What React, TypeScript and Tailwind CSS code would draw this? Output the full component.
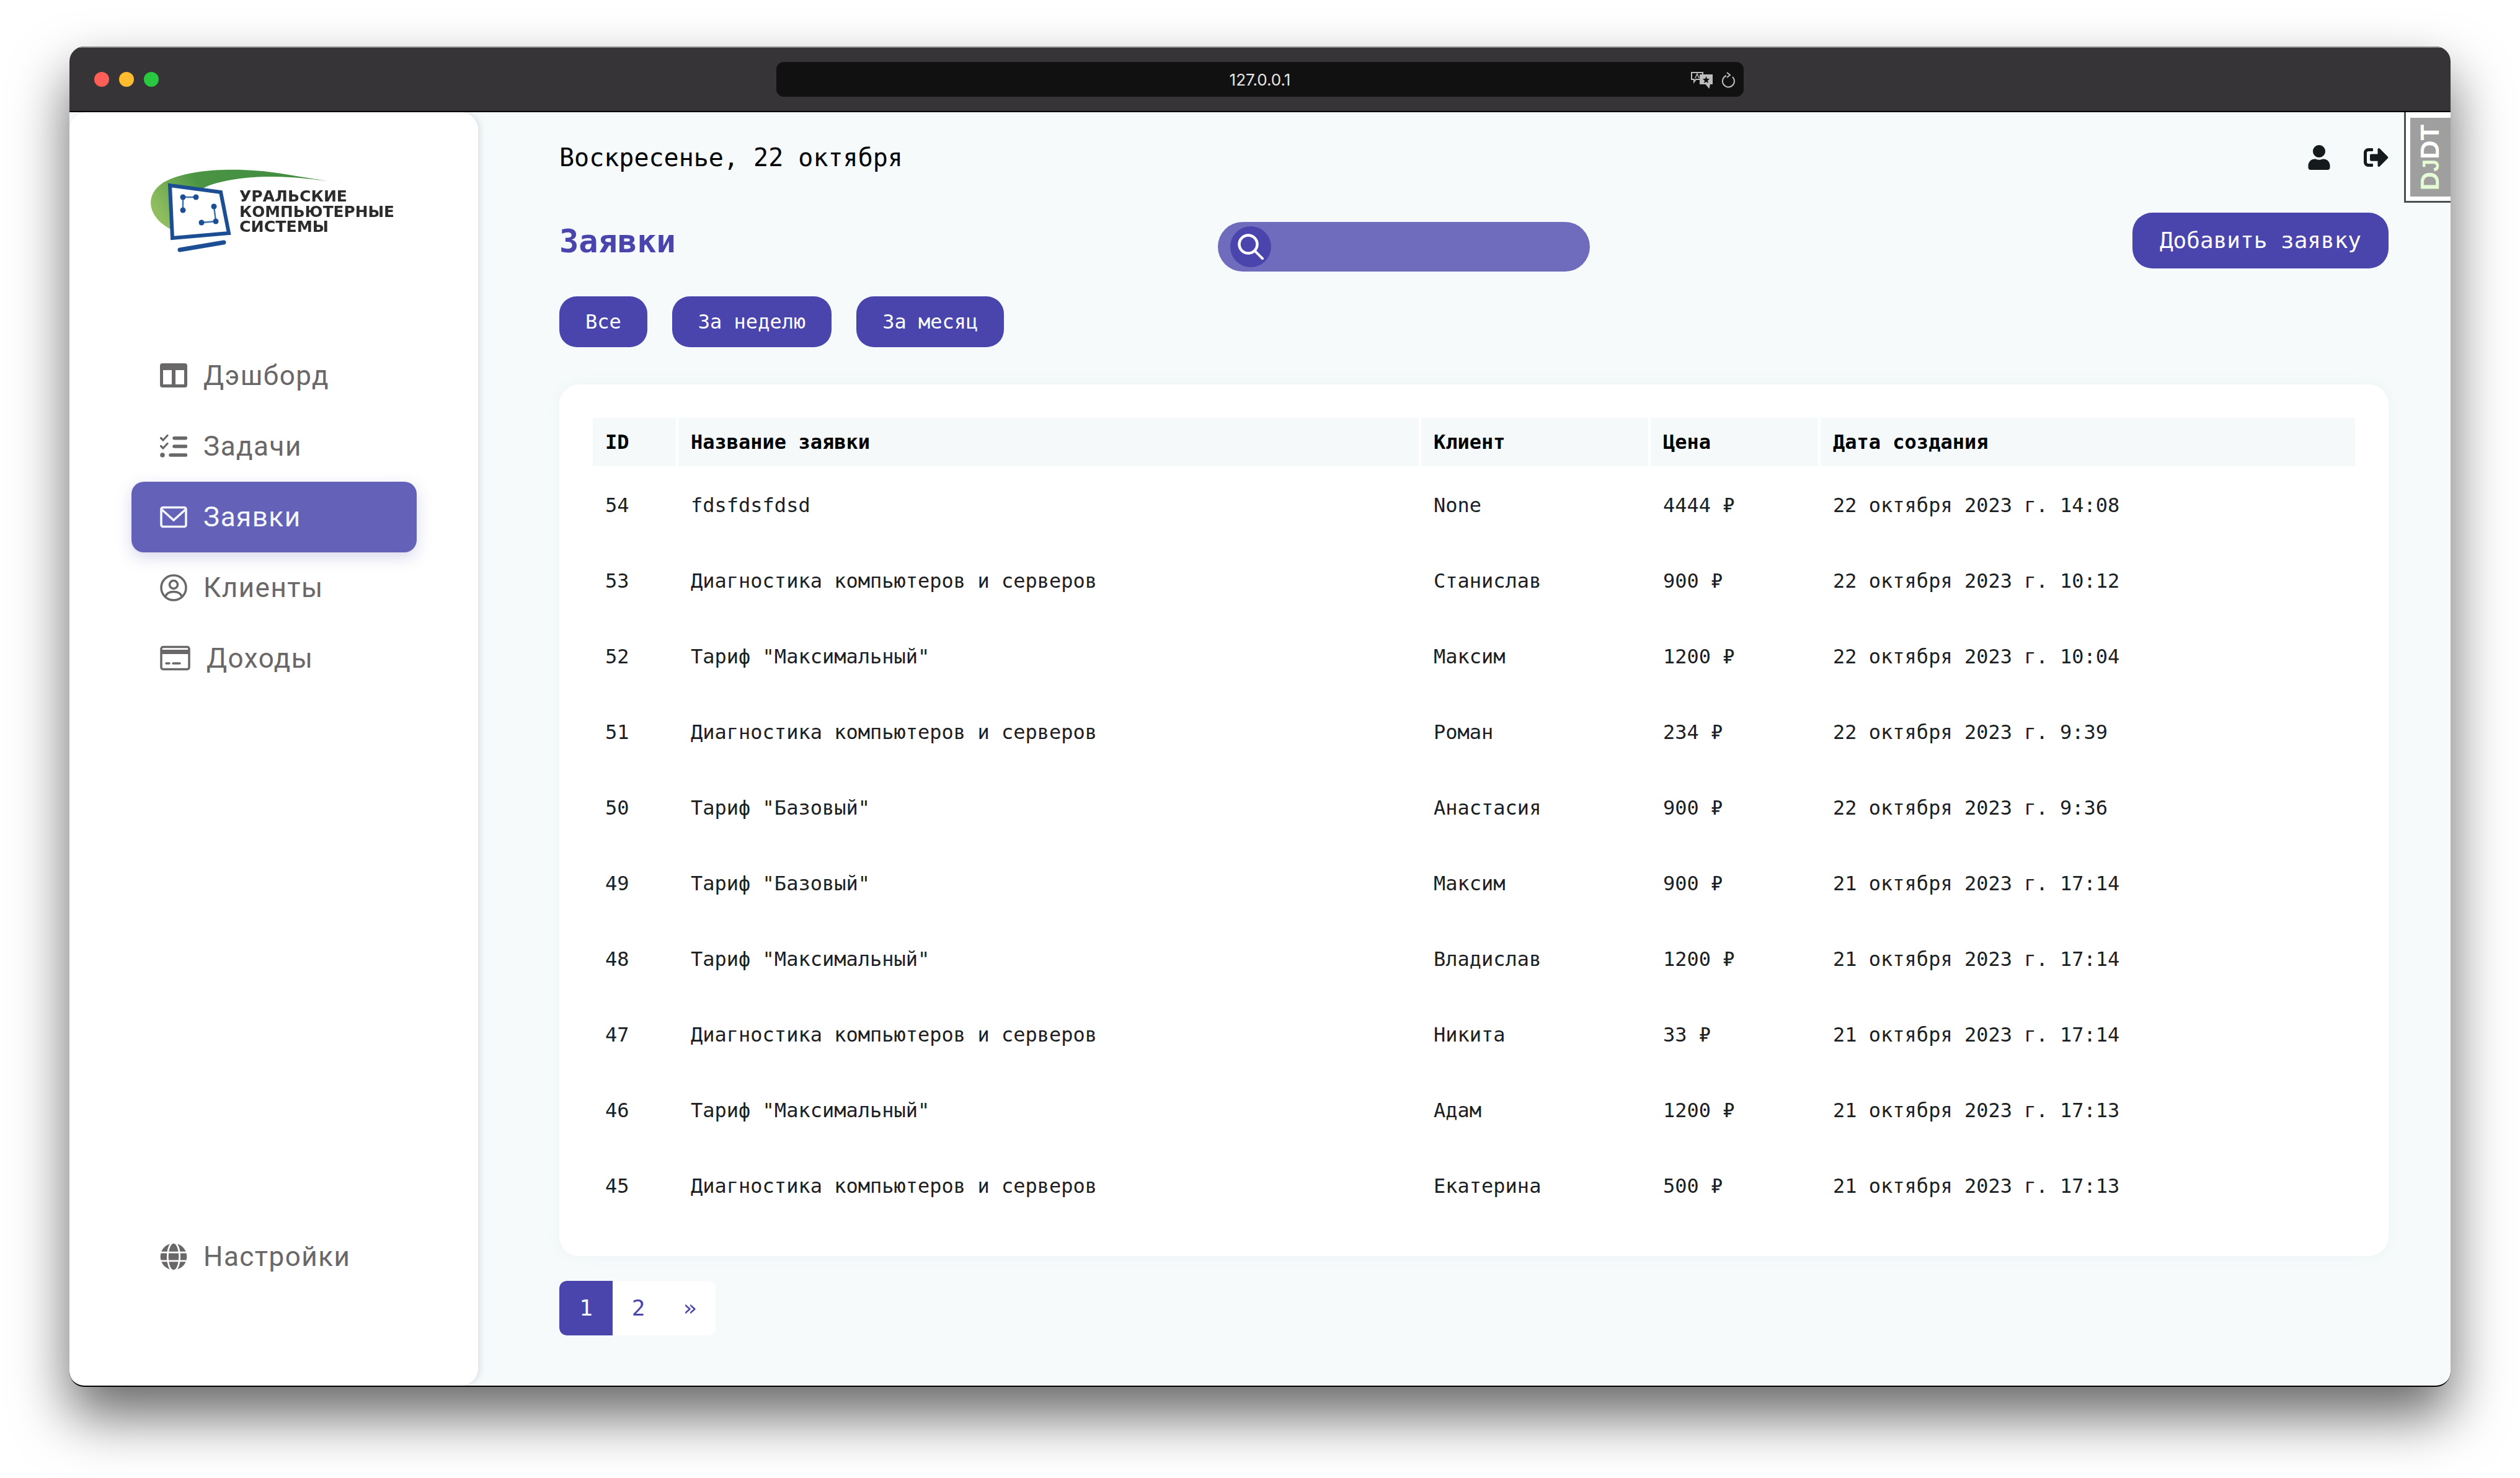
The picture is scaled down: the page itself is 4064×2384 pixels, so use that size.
import { FaGlobe, FaSignOutAlt, FaUser } from "react-icons/fa";

const rows = [
  ["54", "fdsfdsfdsd", "None", "4444 ₽", "22 октября 2023 г. 14:08"],
  ["53", "Диагностика компьютеров и серверов", "Станислав", "900 ₽", "22 октября 2023 г. 10:12"],
  ["52", 'Тариф "Максимальный"', "Максим", "1200 ₽", "22 октября 2023 г. 10:04"],
  ["51", "Диагностика компьютеров и серверов", "Роман", "234 ₽", "22 октября 2023 г. 9:39"],
  ["50", 'Тариф "Базовый"', "Анастасия", "900 ₽", "22 октября 2023 г. 9:36"],
  ["49", 'Тариф "Базовый"', "Максим", "900 ₽", "21 октября 2023 г. 17:14"],
  ["48", 'Тариф "Максимальный"', "Владислав", "1200 ₽", "21 октября 2023 г. 17:14"],
  ["47", "Диагностика компьютеров и серверов", "Никита", "33 ₽", "21 октября 2023 г. 17:14"],
  ["46", 'Тариф "Максимальный"', "Адам", "1200 ₽", "21 октября 2023 г. 17:13"],
  ["45", "Диагностика компьютеров и серверов", "Екатерина", "500 ₽", "21 октября 2023 г. 17:13"],
];

function Logo() {
  return (
    <svg width="440" height="180" viewBox="0 0 440 180" className="blur-[0.7px]">
      <defs>
        <linearGradient id="swoosh" x1="0" x2="1" y1="0.5" y2="0.3">
          <stop offset="0" stopColor="#8fbd5f" />
          <stop offset="0.3" stopColor="#4a9444" />
          <stop offset="1" stopColor="#3f8a3f" />
        </linearGradient>
      </defs>
      <path d="M58 120C22 102 12 66 46 44C88 20 176 20 236 30C272 36 310 42 334 46C290 38 232 33 190 36C150 39 122 46 105 56L58 60Z" fill="url(#swoosh)" />
      <path d="M56 49L138 60L151 126L60 134Z" fill="#fff" stroke="#1c4e93" strokeWidth="6" />
      <path d="M98 68H77V89M127 83L130 107L107 109" fill="none" stroke="#3f73ad" strokeWidth="2.5" />
      {[[77, 68], [98, 68], [77, 89], [127, 83], [130, 107], [107, 109]].map(([cx, cy]) => (
        <circle key={cx + "-" + cy} cx={cx} cy={cy} r="4.5" fill="#1c4e93" />
      ))}
      <path d="M72 153L143 141" stroke="#1c4e93" strokeWidth="7" strokeLinecap="round" />
      <g className="font-['DejaVu_Sans']" fill="#2b2b2b" fontWeight="700" fontSize="24">
        <text x="168" y="75" textLength="174" lengthAdjust="spacingAndGlyphs">УРАЛЬСКИЕ</text>
        <text x="168" y="100" textLength="250" lengthAdjust="spacingAndGlyphs">КОМПЬЮТЕРНЫЕ</text>
        <text x="168" y="124" textLength="144" lengthAdjust="spacingAndGlyphs">СИСТЕМЫ</text>
      </g>
    </svg>
  );
}

function DashIcon() {
  return (
    <svg width="44" height="44" viewBox="0 0 44 44" fill="currentColor">
      <path fillRule="evenodd" d="M4 2H40A4 4 0 0 1 44 6V37A4 4 0 0 1 40 41H4A4 4 0 0 1 0 37V6A4 4 0 0 1 4 2ZM5 13V36H19V13ZM25 13V36H39V13Z" />
    </svg>
  );
}

function TasksIcon() {
  return (
    <svg width="44" height="44" viewBox="0 0 44 44" fill="none" stroke="currentColor" strokeLinecap="round">
      <path d="M1.500 8.500L5 12L12 4.500M1.500 21.500L5 25L12 17.500" strokeWidth="3.200" />
      <circle cx="4" cy="36" r="3.800" fill="currentColor" stroke="none" />
      <path d="M23 8.700H41.500M23 22H41.500M17 36H41.500" strokeWidth="5.500" />
    </svg>
  );
}

function MailIcon() {
  return (
    <svg width="44" height="44" viewBox="0 0 44 44" fill="none" stroke="currentColor">
      <rect x="2" y="6.500" width="40" height="31" rx="3" strokeWidth="3.600" />
      <path d="M3 10L22 27L41 10" strokeWidth="3.600" />
    </svg>
  );
}

function ClientIcon() {
  return (
    <svg width="44" height="44" viewBox="0 0 44 44" fill="none" stroke="currentColor" strokeWidth="3.500">
      <circle cx="22" cy="22" r="20" />
      <circle cx="22" cy="17" r="6.500" />
      <path d="M9 36C11 30 16 28.500 22 28.500C28 28.500 33 30 35 36" />
    </svg>
  );
}

function CardIcon() {
  return (
    <svg width="49" height="44" viewBox="0 0 49 44" fill="none" stroke="currentColor">
      <rect x="2" y="3.500" width="45" height="36" rx="3" strokeWidth="3.500" />
      <path d="M2 11.500H47" strokeWidth="7" />
      <path d="M10 30H15M21 30H32" strokeWidth="3.500" strokeLinecap="round" />
    </svg>
  );
}

function SearchIcon() {
  return (
    <svg width="42" height="42" viewBox="0 0 42 42" fill="none" stroke="currentColor" strokeLinecap="round">
      <circle cx="17" cy="17" r="14.500" strokeWidth="4.500" />
      <path d="M28 28L40 40" strokeWidth="4" />
    </svg>
  );
}

function NavItem({ icon, label, active, gap = "gap-[26px]" }: { icon: React.ReactNode; label: string; active?: boolean; gap?: string }) {
  return (
    <div
      className={`flex h-[114px] w-[460px] items-center rounded-[20px] pl-[46px] font-['Roboto',sans-serif] text-[44px] tracking-[1.5px] ${gap} ${
        active ? "bg-[#6362b8] text-[#f3f6fb] shadow-[0_8px_24px_rgba(99,98,184,0.25)]" : "text-[#696767]"
      }`}
    >
      {icon}
      <span>{label}</span>
    </div>
  );
}

function Sidebar() {
  return (
    <aside className="flex w-[659px] shrink-0 flex-col rounded-[28px] bg-white pl-[100px] pt-[69px] shadow-[4px_0_10px_rgba(120,140,160,0.2)]">
      <div className="ml-[6px]">
        <Logo />
      </div>
      <nav className="mt-[119px] flex flex-col">
        <NavItem icon={<DashIcon />} label="Дэшборд" />
        <NavItem icon={<TasksIcon />} label="Задачи" />
        <NavItem icon={<MailIcon />} label="Заявки" active />
        <NavItem icon={<ClientIcon />} label="Клиенты" />
        <NavItem icon={<CardIcon />} label="Доходы" />
      </nav>
      <div className="mt-[851px]">
        <NavItem icon={<FaGlobe className="h-[44px] w-[44px]" />} label="Настройки" />
      </div>
    </aside>
  );
}

function PageBtn({ children, active }: { children: React.ReactNode; active?: boolean }) {
  return (
    <div className={`flex h-[88px] items-center justify-center text-[36px] ${active ? "w-[86px] rounded-l-[12px] bg-[#4a45ad] text-white" : "w-[83px] text-[#4a45ad]"}`}>
      {children}
    </div>
  );
}

function Main() {
  return (
    <main className="relative flex min-w-0 flex-1 flex-col pl-[131px] pr-[100px] font-['DejaVu_Sans_Mono',monospace]">
      <div className="flex h-[146px] items-center justify-between">
        <div className="text-[40px] text-black">Воскресенье, 22 октября</div>
        <div className="flex items-center gap-[52px] text-[#151a1c]">
          <FaUser className="h-[40px] w-[40px]" />
          <FaSignOutAlt className="h-[40px] w-[40px]" />
        </div>
      </div>

      <div className="flex items-start">
        <h1 className="w-[1062px] pt-[22px] text-[52px] font-bold leading-[80px] text-[#4a45ad]">Заявки</h1>
        <div className="mt-[31px] flex h-[80px] w-[600px] items-center rounded-[40px] bg-[#6f6bbd] pl-[20px]">
          <div className="flex h-[66px] w-[66px] items-center justify-center rounded-full bg-[#4a45ad] text-white">
            <SearchIcon />
          </div>
        </div>
        <button className="ml-auto mt-[16px] h-[90px] w-[413px] rounded-[32px] bg-[#4a45ad] text-[36px] text-white">Добавить заявку</button>
      </div>

      <div className="mt-[40px] flex gap-[40px]">
        {["Все", "За неделю", "За месяц"].map((label) => (
          <button key={label} className="h-[82px] rounded-[28px] bg-[#4a45ad] px-[42px] text-[32px] text-white">
            {label}
          </button>
        ))}
      </div>

      <div className="mt-[60px] rounded-[32px] bg-white p-[50px] shadow-[0_0_20px_rgba(120,140,160,0.07)]">
        <table className="w-full table-fixed border-separate border-spacing-[4px] text-left text-[32px] text-[#1b1f23]">
          <thead>
            <tr className="h-[78px] bg-[#f6f9fa] text-black">
              <th className="w-[134px] pl-[20px] font-bold">ID</th>
              <th className="w-[1194px] pl-[20px] font-bold">Название заявки</th>
              <th className="w-[366px] pl-[20px] font-bold">Клиент</th>
              <th className="w-[270px] pl-[20px] font-bold">Цена</th>
              <th className="pl-[20px] font-bold">Дата создания</th>
            </tr>
          </thead>
          <tbody>
            {rows.map((row) => (
              <tr key={row[0]} className="h-[118px]">
                {row.map((cell, i) => (
                  <td key={i} className="pl-[20px]">
                    {cell}
                  </td>
                ))}
              </tr>
            ))}
          </tbody>
        </table>
      </div>

      <div className="mt-[40px] flex w-[252px] overflow-hidden rounded-[12px] bg-white">
        <PageBtn active>1</PageBtn>
        <PageBtn>2</PageBtn>
        <PageBtn>»</PageBtn>
      </div>

      <div className="absolute right-0 top-0 h-[146px] w-[75px] border-b-[3px] border-l-[3px] border-[#4a4f50] bg-white pl-[7px] pt-[9px]">
        <div className="flex h-[127px] w-[65px] items-center justify-center bg-[#9e9f9e]">
          <div className="-rotate-90 whitespace-nowrap font-['Liberation_Sans',sans-serif] text-[42px] font-bold leading-none text-white">
            <span className="text-[#e5fbd5]">D</span>
            <span className="text-[36px] text-[#e5fbd5]">J</span>
            DT
          </div>
        </div>
      </div>
    </main>
  );
}

export default function App() {
  return (
    <div className="h-[2384px] w-[4064px] overflow-hidden bg-white pl-[112px] pt-[75px]">
      <div className="flex h-[2162px] w-[3840px] flex-col overflow-hidden rounded-[24px] border-b-2 border-black bg-[#f6fafb] shadow-[0_46px_90px_rgba(0,0,0,0.6)]">
        <div className="relative flex h-[106px] shrink-0 items-center justify-center border-b-2 border-t-2 border-b-black border-t-[#8d8d8d] bg-[#363437]">
          <div className="absolute left-[40px] top-[39px] flex gap-[16px]">
            <div className="h-[24px] w-[24px] rounded-full bg-[#ff5f57]" />
            <div className="h-[24px] w-[24px] rounded-full bg-[#febc2e]" />
            <div className="h-[24px] w-[24px] rounded-full bg-[#28c840]" />
          </div>
          <div className="relative flex h-[56px] w-[1560px] items-center justify-center rounded-[12px] bg-[#111111] font-['Inter',sans-serif] text-[26px] text-[#e6e6e6]">
            127.0.0.1
            <div className="absolute right-[14px] top-[15px] flex items-center gap-[14px] text-[#bdbdbd]">
              <svg width="36" height="28" viewBox="0 0 36 28" fill="none" stroke="currentColor" strokeWidth="2">
                <path d="M2 2H20V13H9L6 17V13H2Z" />
                <path d="M16 6H35V20H31L30 26L25 20H16Z" fill="currentColor" />
                <path d="M8 11L11 4L14 11" strokeWidth="1.500" />
                <path d="M25.500 8L27 12H31L28 15L29 19L25.500 17L22 19L23 15L20 12H24Z" fill="#111111" stroke="none" />
              </svg>
              <svg width="22" height="26" viewBox="0 0 22 26" fill="none" stroke="currentColor" strokeWidth="2">
                <path d="M8 6A9.500 9.500 0 1 0 18 8" />
                <path d="M9 1L14 5L9 9" />
              </svg>
            </div>
          </div>
        </div>
        <div className="flex min-h-0 flex-1">
          <Sidebar />
          <Main />
        </div>
      </div>
    </div>
  );
}
